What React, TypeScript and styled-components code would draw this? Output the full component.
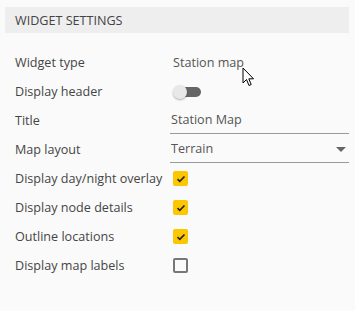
import React from 'react';
import styled, { createGlobalStyle } from 'styled-components';

const GlobalStyle = createGlobalStyle`
  body {
    margin: 0;
    background: #fafafa;
    font-family: "Open Sans", "Liberation Sans", sans-serif;
  }
`;

const Panel = styled.div`
  position: relative;
  width: 355px;
  height: 311px;
  padding: 7px 6px 0 5px;
  box-sizing: border-box;
  background: #fafafa;
`;

const SectionHeader = styled.div`
  height: 26px;
  display: flex;
  align-items: center;
  padding-left: 10px;
  background: #eeeeee;
  color: #444;
  font-size: 12.6px;
  text-transform: uppercase;
`;

const Form = styled.div`
  display: grid;
  grid-template-columns: 155px 1fr;
  grid-auto-rows: 29px;
  padding: 15px 0 0 10px;
`;

const Label = styled.div`
  display: flex;
  align-items: center;
  color: #454545;
  font-size: 12.6px;
`;

const Value = styled.div<{ flush?: boolean }>`
  display: flex;
  align-items: center;
  color: #555;
  font-size: 12.6px;
  padding-left: ${p => (p.flush ? '0' : '3px')};
`;

const Field = styled.div`
  position: relative;
  flex: 1;
  display: flex;
  align-items: center;
  align-self: flex-start;
  height: 27px;
  border-bottom: 1px solid #999;
  color: #555;
  padding-left: 1px;
`;

const Caret = styled.span`
  position: absolute;
  right: 3px;
  top: 12px;
  width: 0;
  height: 0;
  border-left: 5px solid transparent;
  border-right: 5px solid transparent;
  border-top: 5px solid #666;
`;

const Toggle = styled.span<{ on?: boolean }>`
  position: relative;
  display: inline-block;
  width: 28px;
  height: 10px;

  &::before {
    content: '';
    position: absolute;
    left: 6px;
    top: 0;
    right: 0;
    height: 10px;
    border-radius: 5px;
    background: ${p => (p.on ? '#fcc700' : '#666')};
  }

  &::after {
    content: '';
    position: absolute;
    left: ${p => (p.on ? '14px' : '0')};
    top: -2px;
    width: 14px;
    height: 14px;
    border-radius: 50%;
    background: #e8e8e8;
    box-shadow: 0 1px 2px rgba(0, 0, 0, 0.3);
  }
`;

const Checkbox = styled.span<{ checked?: boolean }>`
  display: inline-flex;
  align-items: center;
  justify-content: center;
  box-sizing: border-box;
  width: 15px;
  height: 15px;
  border-radius: 2px;
  background: ${p => (p.checked ? '#fcc700' : 'transparent')};
  border: ${p => (p.checked ? 'none' : '2px solid #777')};
`;

const Pointer = styled.svg`
  position: absolute;
  left: 242px;
  top: 67px;
`;

const Check = () => (
  <svg width="10" height="8" viewBox="0 0 10 8">
    <path d="M1.5 4.2 L3.8 6.3 L8.5 1.5" fill="none" stroke="#222" strokeWidth="1.6" />
  </svg>
);

export default function App() {
  return (
    <>
      <GlobalStyle />
      <Panel>
        <SectionHeader>Widget Settings</SectionHeader>
        <Form>
          <Label>Widget type</Label>
          <Value>Station map</Value>

          <Label>Display header</Label>
          <Value><Toggle /></Value>

          <Label>Title</Label>
          <Value flush><Field>Station Map</Field></Value>

          <Label>Map layout</Label>
          <Value flush><Field>Terrain<Caret /></Field></Value>

          <Label>Display day/night overlay</Label>
          <Value><Checkbox checked><Check /></Checkbox></Value>

          <Label>Display node details</Label>
          <Value><Checkbox checked><Check /></Checkbox></Value>

          <Label>Outline locations</Label>
          <Value><Checkbox checked><Check /></Checkbox></Value>

          <Label>Display map labels</Label>
          <Value><Checkbox /></Value>
        </Form>
        <Pointer width="13" height="20" viewBox="0 0 13 20">
          <path d="M1 1 L1 16 L4.5 12.5 L7 18.5 L9.2 17.5 L6.8 11.8 L11.5 11.8 Z" fill="#fff" stroke="#000" strokeWidth="1" strokeLinejoin="round" />
        </Pointer>
      </Panel>
    </>
  );
}
